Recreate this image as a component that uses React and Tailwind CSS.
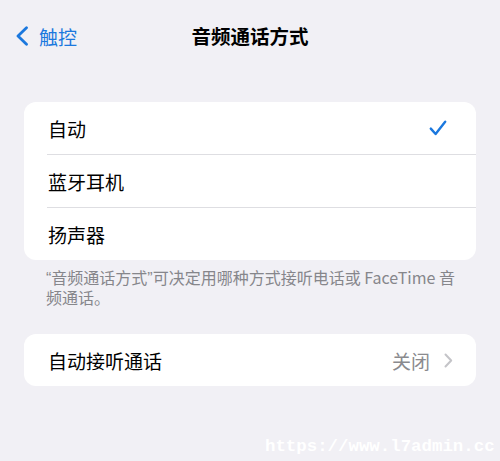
import React from "react";

const font = { fontFamily: '"Noto Sans CJK SC", "Noto Sans", sans-serif' };
const latin = { fontFamily: '"Liberation Sans", Arial, sans-serif' };

export default function App() {
  return (
    <div
      className="relative w-[500px] h-[461px] overflow-hidden bg-[#f1f0f5] text-black"
      style={font}
    >
      {/* Nav bar */}
      <div className="relative h-[72px] flex items-center">
        <div className="flex items-center pl-[15px] gap-[10px] text-[#1b78de]">
          <svg width="14" height="20" viewBox="0 0 14 20" fill="none">
            <path
              d="M11.5 1.8 L3 10 L11.5 18.2"
              stroke="#1b78de"
              strokeWidth="2.8"
              strokeLinecap="round"
              strokeLinejoin="round"
            />
          </svg>
          <span className="text-[19px] leading-none">触控</span>
        </div>
        <div className="absolute left-0 right-0 top-0 h-full flex items-center justify-center pointer-events-none">
          <span className="text-[19.5px] font-semibold leading-none">音频通话方式</span>
        </div>
      </div>

      {/* Card 1 */}
      <div className="mt-[30px] mx-[24px] bg-white rounded-[12px] overflow-hidden">
        <div className="h-[52px] flex items-center justify-between pl-[24px] pr-[29px]">
          <span className="text-[19px] leading-none">自动</span>
          <svg width="18" height="16" viewBox="0 0 18 16" fill="none">
            <path
              d="M1.8 8.6 L6.6 14 L16.2 1.8"
              stroke="#1b78de"
              strokeWidth="2.4"
              strokeLinecap="round"
              strokeLinejoin="round"
            />
          </svg>
        </div>
        <div className="ml-[23px] h-px bg-[#dedee2]" />
        <div className="h-[52px] flex items-center pl-[24px]">
          <span className="text-[19px] leading-none">蓝牙耳机</span>
        </div>
        <div className="ml-[23px] h-px bg-[#dedee2]" />
        <div className="h-[52px] flex items-center pl-[24px]">
          <span className="text-[19px] leading-none">扬声器</span>
        </div>
      </div>

      {/* Footer note */}
      <div className="pt-[8px] pl-[46px] pr-[40px] text-[16px] leading-[19px] text-[#86868b]">
        <span style={latin}>“</span>音频通话方式<span style={latin}>”</span>可决定用哪种方式接听电话或 FaceTime 音频通话。
      </div>

      {/* Card 2 */}
      <div className="mt-[27px] mx-[24px] bg-white rounded-[12px] h-[52px] flex items-center justify-between pl-[24px] pr-[23px]">
        <span className="text-[19px] leading-none">自动接听通话</span>
        <div className="flex items-center gap-[14px]">
          <span className="text-[19px] leading-none text-[#8a8a8e]">关闭</span>
          <svg width="9" height="15" viewBox="0 0 9 15" fill="none">
            <path
              d="M1.5 1.5 L7.2 7.5 L1.5 13.5"
              stroke="#c4c4c8"
              strokeWidth="2"
              strokeLinecap="round"
              strokeLinejoin="round"
            />
          </svg>
        </div>
      </div>

      {/* Watermark */}
      <div
        className="absolute left-[265px] top-[438px] text-[17.4px] font-bold leading-none text-white"
        style={{ fontFamily: '"Liberation Mono", monospace' }}
      >
        https://www.l7admin.cc
      </div>
    </div>
  );
}
